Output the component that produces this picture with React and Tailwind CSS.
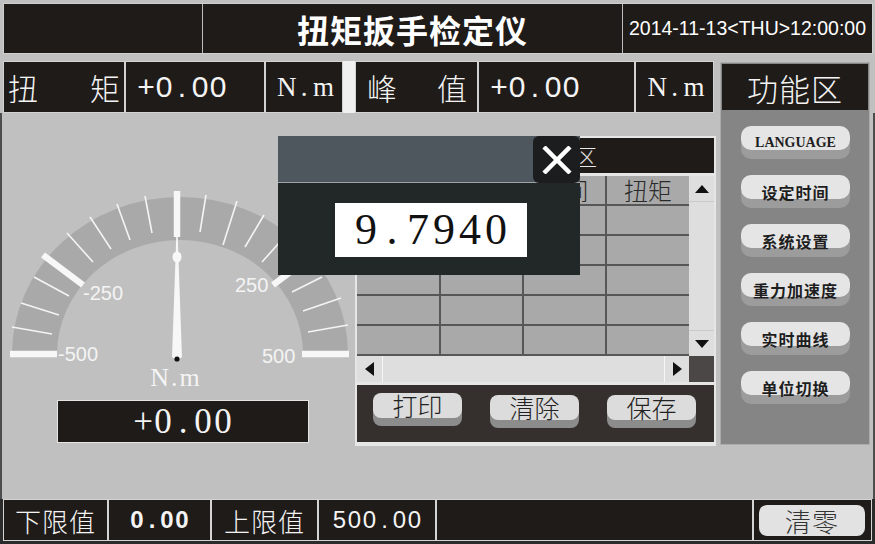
import React from "react";

const SANS = "font-['Liberation_Sans','Noto_Sans_CJK_SC',sans-serif]";
const CJK = "font-['Noto_Sans_CJK_SC','Noto_Sans',sans-serif]";
const SERIF = "font-['Liberation_Serif','Noto_Sans_CJK_SC',serif]";

function Mono({ text, cell }) {
  return (
    <span className="inline-flex">
      {text.split("").map((c, i) => (
        <span key={i} className={`${cell} inline-block text-center`}>
          {c}
        </span>
      ))}
    </span>
  );
}

const MINOR = [
  [12, 327, 52, 334],
  [21, 303, 59, 315],
  [34, 277, 69, 296],
  [67, 233, 93, 262],
  [90, 217, 111, 249],
  [117, 204, 130, 240],
  [145, 196, 152, 233],
  [206, 195, 200, 232],
  [237, 201, 223, 245],
  [264, 215, 245, 247],
  [288, 233, 262, 262],
  [322, 277, 292, 292],
  [341, 298, 303, 311],
  [348, 325, 308, 332],
];
const MAJOR = [
  [10, 354, 57, 354],
  [43, 255, 83, 285],
  [177, 191, 177, 237],
  [313, 255, 273, 285],
  [302, 354, 349, 354],
];

function Gauge() {
  const cx = 180;
  const cy = 354;
  const band = `M${cx - 168} ${cy} A168 157 0 0 1 ${cx + 168} ${cy} L${cx + 123} ${cy} A123 114 0 0 0 ${cx - 123} ${cy} Z`;
  return (
    <svg width="353" height="212" viewBox="2 180 353 212" className="mt-[67px] block">
      <path d={band} fill="#a9a9a9" />
      {MINOR.map((t, i) => (
        <line key={"m" + i} x1={t[0]} y1={t[1]} x2={t[2]} y2={t[3]} stroke="#f4f4f4" strokeWidth="1.6" />
      ))}
      {MAJOR.map((t, i) => (
        <line key={"M" + i} x1={t[0]} y1={t[1]} x2={t[2]} y2={t[3]} stroke="#f7f7f7" strokeWidth="6.5" />
      ))}
      <g fill="#f4f4f4" fontFamily="'Liberation Sans', sans-serif" fontSize="20">
        <text x="58" y="361">-500</text>
        <text x="83" y="300">-250</text>
        <text x="235" y="292">250</text>
        <text x="262" y="363">500</text>
      </g>
      <text x="176" y="386" fill="#f4f4f4" fontFamily="'Liberation Serif', serif" fontSize="26" textAnchor="middle" letterSpacing="2">
        N.m
      </text>
      <path d="M176.2 237 L177.8 237 L178.6 262 L182 357 Q177 362 172 357 L175.4 262 Z" fill="#f7f7f7" />
      <ellipse cx="177" cy="257" rx="4.5" ry="5.5" fill="#f7f7f7" />
      <circle cx="177" cy="359" r="2.6" fill="#111" />
    </svg>
  );
}

function RowCell({ className, children }) {
  return (
    <div className={`h-[52px] border border-[#d2d2d2] bg-[#1f1b19] flex items-center text-[#f4f4f4] ${className}`}>
      {children}
    </div>
  );
}

function SideButton({ children, latin }) {
  return (
    <div className="w-[109px] h-[24px] rounded-[10px] bg-[#e5e5e5] shadow-[0_9px_0_#9c9c9c] flex items-center justify-center pt-[9px] text-[#1e1e1e] leading-none">
      {latin ? (
        <span className={`${SERIF} font-bold text-[14px]`}>{children}</span>
      ) : (
        <span className={`${CJK} font-semibold text-[16px] tracking-[1px]`}>{children}</span>
      )}
    </div>
  );
}

function TableButton({ children }) {
  return (
    <div className={`w-[89px] h-[25px] rounded-[8px] bg-[#dcdcdc] shadow-[0_8px_0_#8c8c8c] flex items-center justify-center text-[25px] leading-none text-[#222] font-light ${CJK}`}>
      {children}
    </div>
  );
}

function Triangle({ dir }) {
  if (dir === "up")
    return (
      <svg width="14" height="8" viewBox="0 0 14 8">
        <polygon points="7,0 14,8 0,8" fill="#111" />
      </svg>
    );
  if (dir === "down")
    return (
      <svg width="14" height="8" viewBox="0 0 14 8">
        <polygon points="0,0 14,0 7,8" fill="#111" />
      </svg>
    );
  if (dir === "left")
    return (
      <svg width="9" height="14" viewBox="0 0 9 14">
        <polygon points="9,0 9,14 0,7" fill="#111" />
      </svg>
    );
  return (
    <svg width="9" height="14" viewBox="0 0 9 14">
      <polygon points="0,0 9,7 0,14" fill="#111" />
    </svg>
  );
}

function BottomCell({ className, children }) {
  return (
    <div className={`h-[42px] border border-[#d4d4d4] bg-[#1f1b19] flex items-center justify-center text-[#f4f4f4] ${className}`}>
      {children}
    </div>
  );
}

export default function App() {
  const headers = ["序号", "日期", "时间", "扭矩"];
  const rows = [0, 1, 2, 3, 4];
  return (
    <div className={`w-[875px] h-[544px] bg-[#c0c0c0] relative overflow-hidden flex flex-col ${SANS}`}>
      {/* top bar */}
      <div className="mt-[3px] ml-[3px] w-[870px] h-[51px] shrink-0 flex bg-[#1f1b19] border border-[#cfcfcf]">
        <div className="w-[199px] border-r border-[#bdbdbd]" />
        <div className={`w-[420px] border-r border-[#bdbdbd] flex items-center justify-center text-white text-[32px] font-bold tracking-[1px] leading-none ${CJK}`}>
          扭矩扳手检定仪
        </div>
        <div className="flex-1 flex items-center justify-center text-white text-[19.5px] leading-none">
          2014-11-13&lt;THU&gt;12:00:00
        </div>
      </div>

      {/* middle */}
      <div className="mt-[7px] h-[438px] shrink-0 flex">
        <div className="w-[716px] flex flex-col">
          <div className="ml-[3px] h-[52px] flex">
            <RowCell className={`w-[122px] justify-between px-[4px] text-[30px] font-light ${CJK}`}>
              <span>扭</span>
              <span>矩</span>
            </RowCell>
            <RowCell className="w-[140px] pl-[11px] text-[30px] leading-none">
              <Mono text="+0.00" cell="w-[18px]" />
            </RowCell>
            <RowCell className={`w-[78px] justify-center text-[27px] leading-none ${SERIF}`}>
              <Mono text="N.m" cell="w-[18px]" />
            </RowCell>
            <div className="w-[12px] h-[52px] bg-[#f0f0f0]" />
            <RowCell className={`w-[123px] justify-between pl-[11px] pr-[10px] text-[30px] font-light ${CJK}`}>
              <span>峰</span>
              <span>值</span>
            </RowCell>
            <RowCell className="w-[157px] pl-[11px] text-[30px] leading-none">
              <Mono text="+0.00" cell="w-[18px]" />
            </RowCell>
            <RowCell className={`w-[79px] justify-center text-[27px] leading-none ${SERIF}`}>
              <Mono text="N.m" cell="w-[18px]" />
            </RowCell>
          </div>

          <div className="flex-1 flex border-l-2 border-[#4d4d4d]">
            {/* gauge column */}
            <div className="w-[353px] flex flex-col">
              <Gauge />
              <div className={`mt-[8px] ml-[55px] w-[252px] h-[43px] bg-[#1f1b19] border border-[#e4e4e4] flex items-center justify-center text-[#f4f4f4] text-[35px] leading-none ${SERIF}`}>
                <Mono text="+0.00" cell="w-[20px]" />
              </div>
            </div>

            {/* table panel */}
            <div className="mt-[23px] w-[361px] h-[310px] bg-[#e6e6e6] p-[2px] flex flex-col">
              <div className={`h-[35px] bg-[#1f1b19] flex items-center justify-center pl-[57px] text-[#e8e8e8] text-[22px] font-light ${CJK}`}>
                数据区
              </div>
              <div className="h-[3px]" />
              <div className="flex">
                <div className="w-[332px] bg-[#575757] pb-[2px] grid grid-cols-[82px_81px_81px_82px] gap-[2px]">
                  {headers.map((h) => (
                    <div key={h} className={`h-[28px] bg-[#a9a9a9] flex items-center justify-center text-[24px] leading-none text-[#2a2a2a] font-light ${CJK}`}>
                      {h}
                    </div>
                  ))}
                  {rows.map((r) =>
                    headers.map((h) => <div key={r + h} className="h-[28px] bg-[#a9a9a9]" />)
                  )}
                </div>
                <div className="w-[25px] h-[180px] bg-[#dedede] flex flex-col">
                  <div className="h-[26px] flex items-center justify-center border-b border-[#cacaca]">
                    <Triangle dir="up" />
                  </div>
                  <div className="flex-1" />
                  <div className="h-[26px] flex items-center justify-center border-t border-[#cacaca]">
                    <Triangle dir="down" />
                  </div>
                </div>
              </div>
              <div className="flex h-[26px]">
                <div className="w-[332px] bg-[#dedede] flex">
                  <div className="w-[26px] flex items-center justify-center border-r border-[#f6f6f6]">
                    <Triangle dir="left" />
                  </div>
                  <div className="flex-1" />
                  <div className="w-[25px] flex items-center justify-center border-l border-[#f6f6f6]">
                    <Triangle dir="right" />
                  </div>
                </div>
                <div className="w-[25px] bg-[#4b4746]" />
              </div>
              <div className="h-[3px]" />
              <div className="h-[57px] bg-[#35302d] flex items-start pt-[8px] pl-[16px] gap-[28px]">
                <TableButton>打印</TableButton>
                <div className="mt-[2px]">
                  <TableButton>清除</TableButton>
                </div>
                <div className="mt-[2px]">
                  <TableButton>保存</TableButton>
                </div>
              </div>
            </div>
          </div>
        </div>

        {/* right group */}
        <div className="flex-1 flex">
          <div className="ml-[4px] mt-[1px] w-[150px] h-[383px] bg-[#858585] border border-[#ababab] flex flex-col">
            <div className={`m-[1px] h-[46px] bg-[#1f1b19] flex items-center justify-center text-[#f4f4f4] text-[31px] tracking-[1px] font-light leading-none ${CJK}`}>
              功能区
            </div>
            <div className="mt-[15px] pl-[20px] flex flex-col gap-[25px]">
              <SideButton latin>LANGUAGE</SideButton>
              <SideButton>设定时间</SideButton>
              <SideButton>系统设置</SideButton>
              <SideButton>重力加速度</SideButton>
              <SideButton>实时曲线</SideButton>
              <SideButton>单位切换</SideButton>
            </div>
          </div>
          <div className="flex-1" />
          <div className="w-[2px] mt-[52px] bg-[#4d4d4d]" />
        </div>
      </div>

      {/* bottom bar */}
      <div className="flex h-[45px] bg-[#2b2b2b] pl-[3px]">
        <BottomCell className={`w-[105px] text-[26px] font-light tracking-[1px] ${CJK}`}>下限值</BottomCell>
        <BottomCell className="w-[103px] text-[24px] font-bold leading-none">
          <Mono text="0.00" cell="w-[15px]" />
        </BottomCell>
        <BottomCell className={`w-[107px] text-[26px] font-light tracking-[1px] ${CJK}`}>上限值</BottomCell>
        <BottomCell className="w-[118px] text-[24px] leading-none">
          <Mono text="500.00" cell="w-[15px]" />
        </BottomCell>
        <BottomCell className="w-[317px]" />
        <div className="w-[119px] h-[42px] border border-[#d4d4d4] bg-[#1f1b19] pl-[5px] pt-[5px]">
          <div className={`w-[106px] h-[31px] rounded-[8px] bg-[#e2e2e2] flex items-center justify-center text-[26px] leading-none text-[#333] font-light tracking-[1px] ${CJK}`}>
            清零
          </div>
        </div>
      </div>

      {/* popup */}
      <div className="absolute left-[278px] top-[136px] w-[302px] h-[139px] flex flex-col">
        <div className="h-[47px] bg-[#4f575e] border-b border-[#9ea3a7] relative">
          <div className="absolute right-0 top-0 w-[47px] h-[47px] rounded-[6px] bg-[#1b1d1f] flex items-center justify-center">
            <svg width="30" height="28" viewBox="0 0 30 28">
              <line x1="2" y1="1" x2="28" y2="27" stroke="#fff" strokeWidth="4.5" />
              <line x1="28" y1="1" x2="2" y2="27" stroke="#fff" strokeWidth="4.5" />
            </svg>
          </div>
        </div>
        <div className="flex-1 bg-[#212827] pt-[20px] pl-[57px]">
          <div className={`w-[192px] h-[54px] bg-white flex items-center justify-center text-[#111] text-[44px] leading-none ${SERIF}`}>
            <Mono text="9.7940" cell="w-[26px]" />
          </div>
        </div>
      </div>
    </div>
  );
}
